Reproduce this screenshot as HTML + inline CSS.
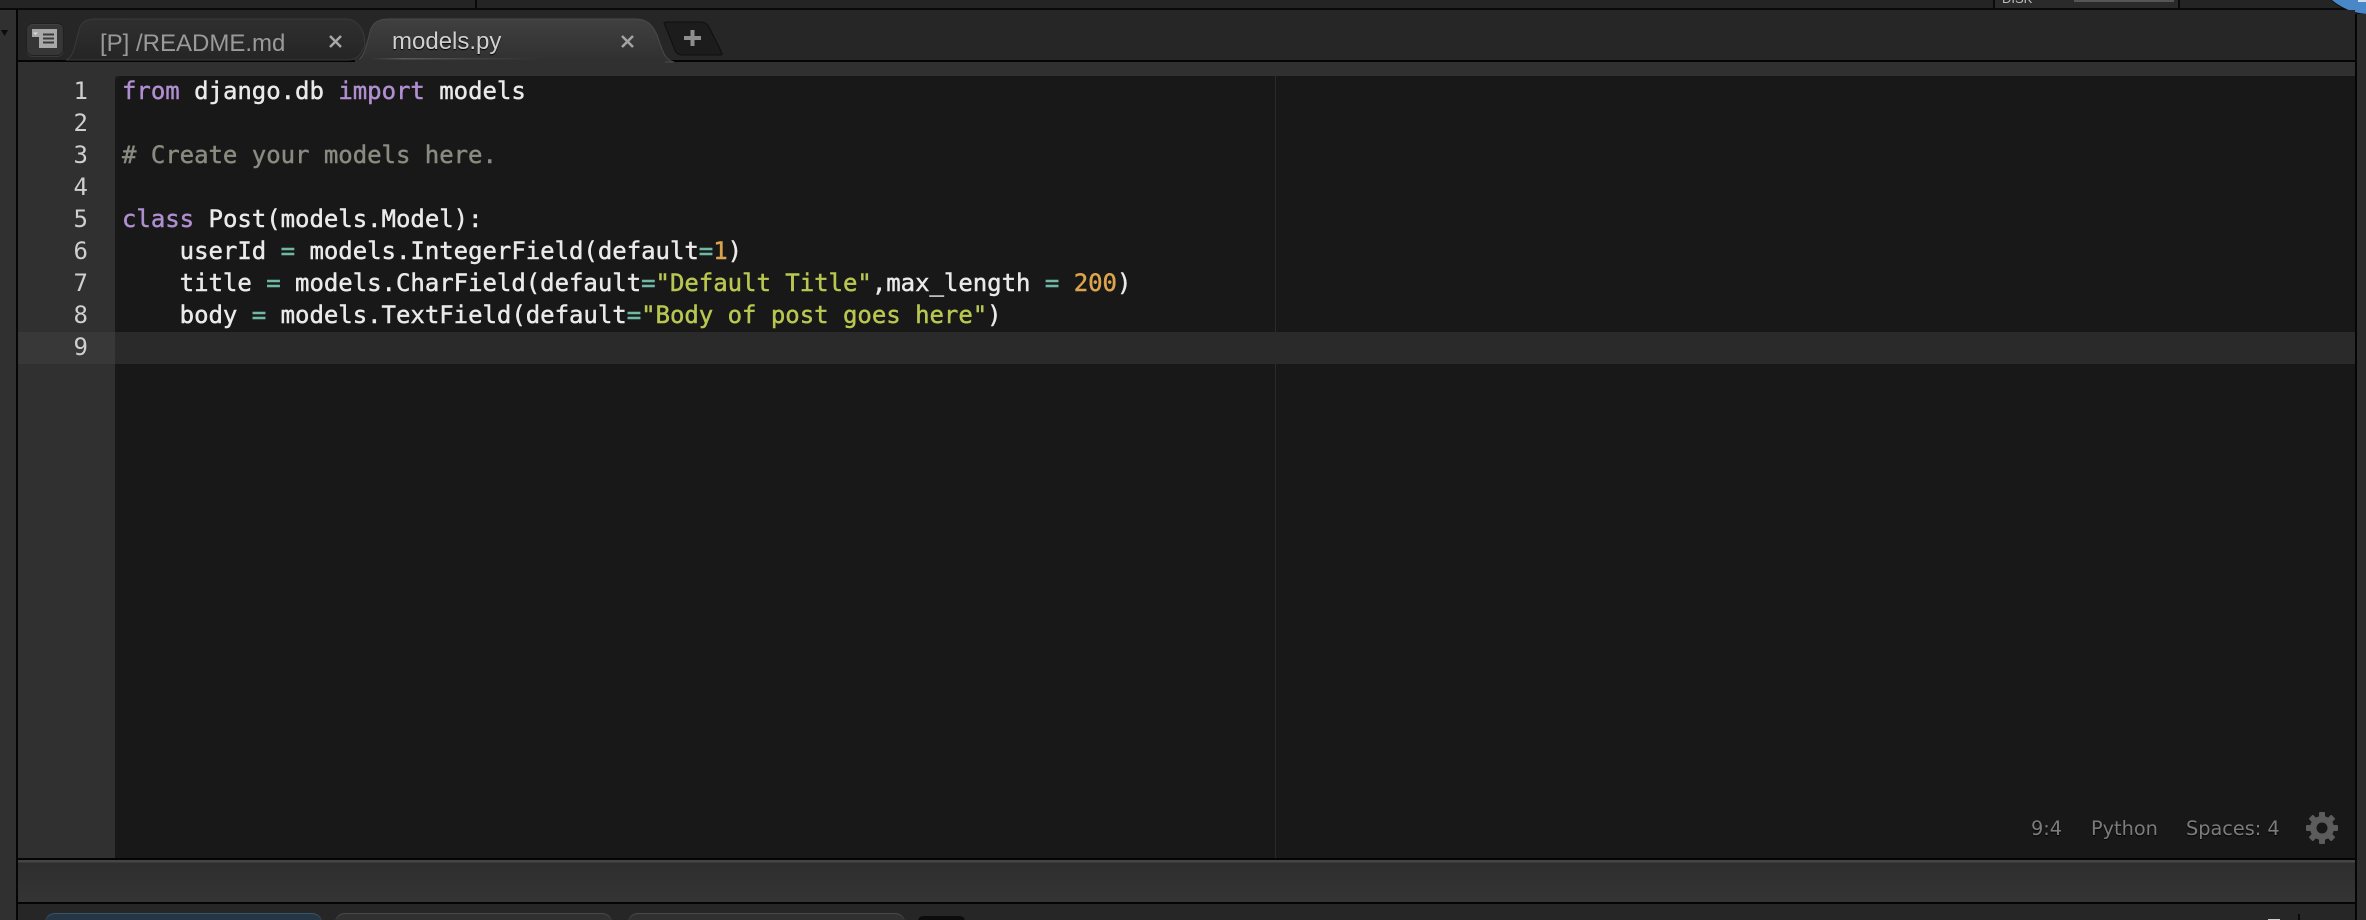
<!DOCTYPE html>
<html><head><meta charset="utf-8">
<style>
html,body{margin:0;padding:0;background:#262626;}
#r{position:relative;width:2366px;height:920px;overflow:hidden;background:#262626;font-family:"Liberation Sans",sans-serif;}
.a{position:absolute;}
.ln{position:absolute;left:18px;width:70px;text-align:right;height:32px;font:24px/32px "DejaVu Sans Mono",monospace;color:#cfcfcf;margin-top:-1px;}
.c{position:absolute;left:122px;height:32px;white-space:pre;font:24px/32px "DejaVu Sans Mono",monospace;letter-spacing:-0.03px;color:#eaeaea;-webkit-text-stroke:0.45px currentColor;margin-top:-1px;}
.k{color:#b08fd0}.o{color:#6fb8a4}.s{color:#b9c750}.n{color:#dca44c}
.st{position:absolute;top:816px;font:19.3px/26px "DejaVu Sans",sans-serif;color:#7c7c7c;text-shadow:0 1px 1px #000;}
</style></head><body><div id="r">
<!-- top strip -->
<div class="a" style="left:0;top:0;width:2366px;height:8px;background:#242424"></div>
<div class="a" style="left:0;top:8px;width:2366px;height:2px;background:#0a0a0a"></div>
<div class="a" style="left:475px;top:0;width:2px;height:8px;background:#0a0a0a"></div>
<div class="a" style="left:1993px;top:0;width:2px;height:8px;background:#0a0a0a"></div>
<div class="a" style="left:2178px;top:0;width:2px;height:8px;background:#0a0a0a"></div>
<div class="a" style="left:1995px;top:0;width:183px;height:8px;background:#2a2a2a"></div>
<div class="a" style="left:2002px;top:-8px;font:13px/14px 'Liberation Sans',sans-serif;color:#bbb">DISK</div>
<div class="a" style="left:2074px;top:0;width:100px;height:2px;background:#555"></div>
<div class="a" style="left:2311px;top:-104px;width:118px;height:118px;border-radius:50%;background:#4a87c9;box-shadow:0 1px 0 #0a0a0a"></div>
<div class="a" style="left:2358px;top:0;width:8px;height:2px;background:#cfdcea"></div>
<!-- side columns -->
<div class="a" style="left:0;top:10px;width:16px;height:910px;background:#303030"></div>
<div class="a" style="left:16px;top:9px;width:2px;height:911px;background:#050505"></div>
<div class="a" style="left:2355px;top:14px;width:2px;height:906px;background:#050505"></div>
<div class="a" style="left:2357px;top:14px;width:9px;height:906px;background:#2c2c2c"></div>
<svg class="a" style="left:0;top:28px" width="10" height="10"><path d="M1 2H8L4.500 8Z" fill="#0c0c0c"/></svg>
<!-- tab bar -->
<div class="a" style="left:18px;top:10px;width:2337px;height:50px;background:#262626"></div>
<div class="a" style="left:18px;top:60px;width:2337px;height:2px;background:#050505"></div>
<div class="a" style="left:18px;top:62px;width:2337px;height:14px;background:#303030"></div>
<!-- list button -->
<div class="a" style="left:27px;top:24px;width:36px;height:31px;border-radius:6px;background:#363636;box-shadow:0 0 0 1px #202020,0 1px 0 1px #3a3a3a,inset 0 1px 0 #404040"></div>
<svg class="a" style="left:30px;top:27px" width="30" height="24"><path d="M2 2H27V21H9V10H2Z" fill="#a8a8a8"/><path d="M13 7.500H24M13 11.500H24M13 15.500H24" stroke="#3a3a3a" stroke-width="2"/><path d="M3 5.500H8L5.500 8Z" fill="#ddd"/></svg>
<!-- tabs -->
<svg class="a" style="left:60px;top:15px" width="680" height="50">
<defs><linearGradient id="g1" x1="0" y1="0" x2="0" y2="1"><stop offset="0" stop-color="#2f2f2f"/><stop offset="1" stop-color="#252525"/></linearGradient>
<linearGradient id="g2" x1="0" y1="0" x2="0" y2="1"><stop offset="0" stop-color="#404040"/><stop offset="1" stop-color="#303030"/></linearGradient>
<linearGradient id="g3" x1="0" y1="0" x2="1" y2="0"><stop offset="0" stop-color="#555" stop-opacity="0"/><stop offset=".2" stop-color="#5a5a5a"/><stop offset="1" stop-color="#555" stop-opacity="0"/></linearGradient></defs>
<path d="M6 45C14 42 15 30 19 15C21 7 26 4 36 4H285C295 4 300 9 304 20L305 30C301 40 297 45 288 45Z" fill="url(#g1)" stroke="#3a3a3a" stroke-width="1"/>
<path d="M295 47C304 44 306 32 310 17C312 8 318 4 328 4H575C587 4 592 9 597 20C602 34 604 45 614 47Z" fill="url(#g2)" stroke="#4a4a4a" stroke-width="1"/>
<rect x="295" y="44.500" width="310" height="3" fill="#303030"/>
<rect x="310" y="43" width="170" height="1.500" fill="url(#g3)"/>
<path d="M604 8C604 7 606 7 608 7H640C645 7 648 9 650 14L661 36C663 40 662 40 658 40H622C618 40 616 38 615 35Z" fill="#1c1c1c" stroke="#0f0f0f" stroke-width="1"/>
<path d="M624 23H641M632.500 15V31" stroke="#8e8e8e" stroke-width="4"/>
<path d="M270 21L281 32M281 21L270 32" stroke="#a8a8a8" stroke-width="2.500"/>
<path d="M562 21L573 32M573 21L562 32" stroke="#a4a4a4" stroke-width="2.500"/>
</svg>
<div class="a" style="left:100px;top:29px;font:24px/30px 'Liberation Sans',sans-serif;color:#9a9a9a;white-space:pre">[P] /README.md</div>
<div class="a" style="left:392px;top:27px;font:24px/30px 'Liberation Sans',sans-serif;color:#d0d0d0;white-space:pre;text-shadow:0 1px 1px #000">models.py</div>
<!-- gutter + editor -->
<div class="a" style="left:18px;top:76px;width:97px;height:782px;background:#303030"></div>
<div class="a" style="left:115px;top:76px;width:2240px;height:782px;background:#181818;border-top-left-radius:5px"></div>
<div class="a" style="left:18px;top:332px;width:97px;height:32px;background:#383838"></div>
<div class="a" style="left:115px;top:332px;width:2240px;height:32px;background:#2a2a2a"></div>
<div class="a" style="left:1275px;top:76px;width:1px;height:782px;background:#2a2a2a"></div>
<div class="ln" style="top:76px">1</div><div class="ln" style="top:108px">2</div><div class="ln" style="top:140px">3</div><div class="ln" style="top:172px">4</div><div class="ln" style="top:204px">5</div><div class="ln" style="top:236px">6</div><div class="ln" style="top:268px">7</div><div class="ln" style="top:300px">8</div><div class="ln" style="top:332px">9</div>
<div class="c" style="top:76px"><span class="k">from</span> django.db <span class="k">import</span> models</div>
<div class="c" style="top:140px;color:#8a8a80"># Create your models here.</div>
<div class="c" style="top:204px"><span class="k">class</span> Post(models.Model):</div>
<div class="c" style="top:236px">    userId <span class="o">=</span> models.IntegerField(default<span class="o">=</span><span class="n">1</span>)</div>
<div class="c" style="top:268px">    title <span class="o">=</span> models.CharField(default<span class="o">=</span><span class="s">"Default Title"</span>,max_length <span class="o">=</span> <span class="n">200</span>)</div>
<div class="c" style="top:300px">    body <span class="o">=</span> models.TextField(default<span class="o">=</span><span class="s">"Body of post goes here"</span>)</div>
<!-- status -->
<div class="st" style="left:2031px">9:4</div>
<div class="st" style="left:2091px">Python</div>
<div class="st" style="left:2186px">Spaces: 4</div>
<svg class="a" style="left:2305px;top:811px" width="34" height="36" viewBox="-17 -17 34 36">
<g fill="#5c5c5c"><circle r="12"/>
<rect x="-3" y="-16" width="6" height="32" rx="1"/><rect x="-3" y="-16" width="6" height="32" rx="1" transform="rotate(45)"/><rect x="-3" y="-16" width="6" height="32" rx="1" transform="rotate(90)"/><rect x="-3" y="-16" width="6" height="32" rx="1" transform="rotate(135)"/></g>
<circle r="5.500" fill="#181818"/></svg>
<!-- bottom bar -->
<div class="a" style="left:18px;top:858px;width:2337px;height:2px;background:#050505"></div>
<div class="a" style="left:18px;top:860px;width:2337px;height:42px;background:linear-gradient(#454545 0,#454545 2px,#2e2e2e 3px,#343434 100%)"></div>
<div class="a" style="left:18px;top:902px;width:2337px;height:2px;background:#050505"></div>
<div class="a" style="left:18px;top:904px;width:2337px;height:16px;background:#262626"></div>
<div class="a" style="left:45px;top:913px;width:277px;height:20px;border-radius:10px 10px 0 0;background:#243646;box-shadow:inset 0 1px 0 #3a5468"></div>
<div class="a" style="left:335px;top:913px;width:277px;height:20px;border-radius:10px 10px 0 0;background:#303030;box-shadow:inset 0 1px 0 #4a4a4a"></div>
<div class="a" style="left:628px;top:913px;width:277px;height:20px;border-radius:10px 10px 0 0;background:#303030;box-shadow:inset 0 1px 0 #4a4a4a"></div>
<div class="a" style="left:918px;top:916px;width:47px;height:10px;border-radius:5px;background:#0c0c0c"></div>
<div class="a" style="left:2268px;top:919px;width:12px;height:1px;background:#ccc"></div>
<div class="a" style="left:2298px;top:914px;width:2px;height:6px;background:#0a0a0a"></div>
</div></body></html>
